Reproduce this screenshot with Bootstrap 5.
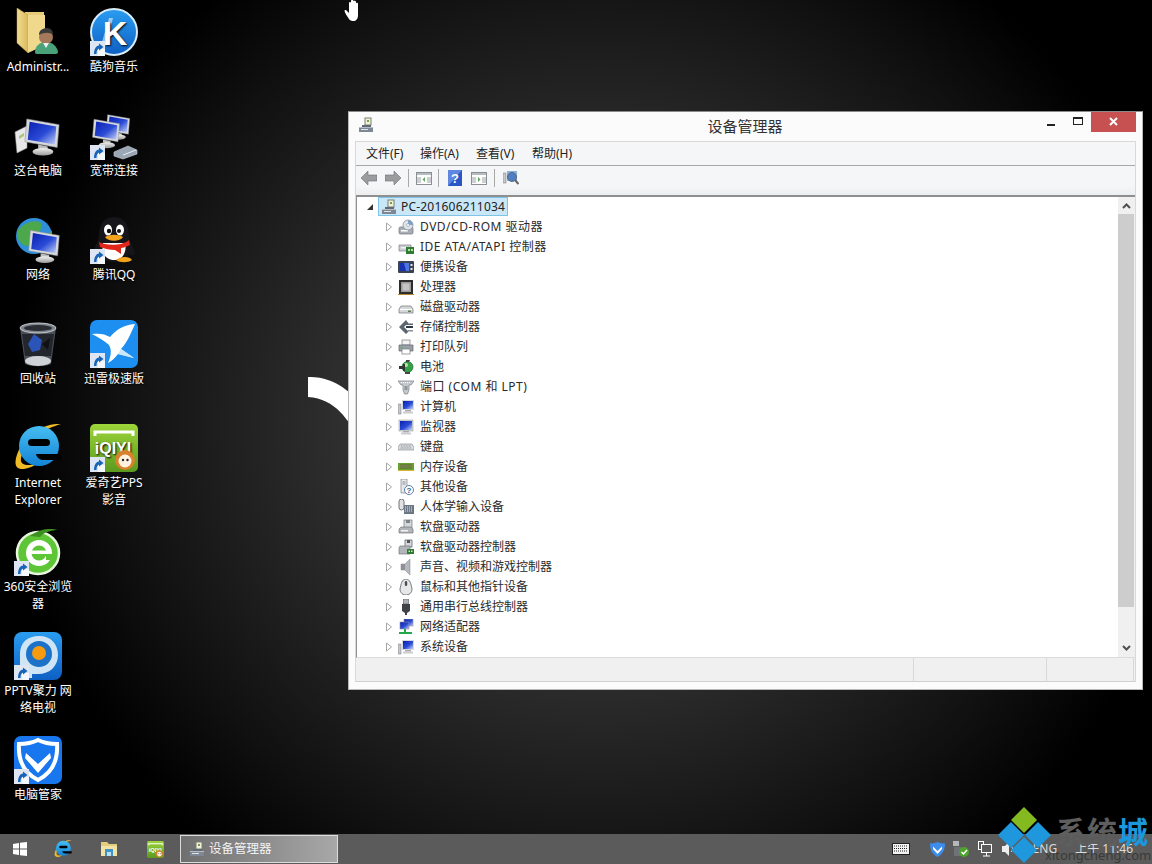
<!DOCTYPE html>
<html lang="zh-CN">
<head>
<meta charset="utf-8">
<title>设备管理器</title>
<link href="https://cdn.jsdelivr.net/npm/bootstrap@5.3.0/dist/css/bootstrap.min.css" rel="stylesheet">
<style>
html,body{margin:0;height:100%;overflow:hidden}
body{width:1152px;height:864px;background:#000;font-family:"Noto Sans","Noto Sans CJK SC",sans-serif;font-size:12px;color:#1a1a1a}
.defsbox{position:absolute;width:0;height:0;overflow:hidden}
.screen{width:1152px;height:864px;position:relative;overflow:hidden;background:radial-gradient(ellipse 590px 560px at 600px 420px,#484848 0%,#3b3b3b 28%,#252525 56%,#101010 82%,#000 100%)}
.desk{height:834px;position:relative}
.dgrid{display:grid;grid-auto-flow:column;grid-template-rows:repeat(8,104px);grid-template-columns:76px 76px;padding-top:0}
.ditem{width:76px;height:104px;padding-top:8px;position:relative;text-align:center;color:#fff;line-height:17px;text-shadow:1px 1px 2px #000}
.ditem>svg.ic{display:block;margin:0 auto 2px;width:48px;height:48px}
.sc{position:absolute;left:14px;top:41px;width:15px;height:15px}
.swoosh{position:absolute;left:300px;top:370px;width:60px;height:70px}
.hand{position:absolute;left:344px;top:0;width:18px;height:22px}
.win{position:absolute;left:348px;top:111px;width:795px;height:579px;background:#fbfbfb;border:1px solid #b8b8b8;border-top-color:#8a8a8a}
.ttl{height:29px;position:relative;font-size:15px;color:#333;line-height:29px;text-align:center;padding-right:1px}
.ttl .wi{position:absolute;left:9px;top:5px;width:16px;height:16px}
.wbtn{position:absolute;top:0;height:20px}
.wmin{left:687px;width:30px}
.wmin i{display:block;width:8px;height:2px;background:#222;margin:12px auto 0}
.wmax{left:714px;width:30px}
.wmax i{display:block;width:10px;height:8px;border:1px solid #222;border-top-width:2px;margin:5px auto 0}
.wcls{left:742px;width:45px;background:#c75050}
.wcls svg{display:block;width:9px;height:9px;margin:5px auto 0}
.pane{margin:0 6px 0 6px;border-left:1px solid #d9d9d9;border-right:1px solid #d9d9d9}
.mbar{height:25px;background:#f5f6f7;border-top:1px solid #d9d9d9;border-bottom:1px solid #a8a8a8;line-height:23px;color:#222}
.mbar span{display:block;width:56px;padding-left:10px}
.mbar span:first-child{width:54px}
.tbar{height:29px;background:linear-gradient(#f5f6f7 70%,#eceef0);padding:0 0 5px 5px}
.tbar svg{display:block;flex:none}
.tsep{width:1px;height:18px;background:#a9a9a9;flex:none}
.tg1{margin-left:7px}.tg2{margin-left:7px}.tg3{margin-left:6px}.tg4{margin-left:9px}.tg5{margin-left:9px}.tg6{margin-left:7px}.tg7{margin-left:8px}
.tree{height:463px;background:#fff;border-top:2px solid #8f8f8f;border-left:1px solid #8f8f8f;position:relative;border-bottom:1px solid #dcdcdc}
.trow{height:20px;line-height:20px;white-space:nowrap}
.root{padding-left:9px}
.rsel{display:flex;align-items:center;height:19px;border:1px solid #7fc4e8;background:#c9e7f7;padding-left:2px;margin-left:4px;width:130px;color:#222;margin-top:-1px;letter-spacing:.2px}
.rsel svg{flex:none;margin-right:4px}
.kid{padding-left:28px;color:#2a2a2a}
.kid.wide{letter-spacing:.5px}
.kid svg.x{flex:none;width:8px;height:10px;margin-right:5px}
.kid svg.d{flex:none;width:16px;height:16px;margin-right:6px}
.scroll{position:absolute;right:0;top:0;bottom:0;width:17px;background:#f0f0f0}
.sthumb{position:absolute;left:0;right:1px;top:17px;height:393px;background:#cdcdcd}
.sup{position:absolute;left:4px;top:6px;width:9px;height:6px}
.sdn{position:absolute;left:4px;bottom:6px;width:9px;height:6px}
.stat{height:24px;background:#f0f0f0;border-bottom:1px solid #d0d0d0}
.stat div{height:23px;border-right:1px solid #d8d8d8}
.s1{width:558px}.s2{width:133px}.s3{width:87px}
.tb{height:30px;background:#5b5b5b;position:relative;color:#e8e8e8}
.tapp{height:30px;width:46px;flex:none}
.tapp svg{display:block}
.tstart{width:40px}
.tact{width:158px;height:28px;margin-left:2px;border:1px solid #dcdcdc;background:linear-gradient(90deg,#6f6f6f,#a8a8a8);padding-left:8px;color:#f2f2f2;font-size:12.5px;flex:none}
.tact svg{margin-right:4px}
.tray svg{display:block;flex:none}
.trtx{color:#ddd;font-size:12px;white-space:nowrap}
.tk2{margin-left:20px}.tk3{margin-left:8px}.tk4{margin-left:9px}.tk5{margin-left:10px}.tk6{margin-left:17px}.tk7{margin-left:18px;margin-right:19px}
.wm{position:absolute;left:996px;top:805px;width:156px;height:59px;pointer-events:none}
.wmt{position:absolute;left:1056px;top:812px;font-size:30px;line-height:36px;font-weight:700;letter-spacing:1px;white-space:nowrap;font-family:"Noto Sans CJK SC",sans-serif;color:#5e5e5e}
.wmt b{color:#1b97dc;font-weight:700}
.wmu{position:absolute;left:1045px;top:847px;font-size:13px;line-height:16px;color:#3a3a3a;white-space:nowrap}
</style>
</head>
<body>
<svg class="defsbox" aria-hidden="true">
<defs>
<linearGradient id="gs" x1="0" y1="0" x2="1" y2="1"><stop offset="0" stop-color="#0a1fb0"/><stop offset=".55" stop-color="#2a4bd6"/><stop offset="1" stop-color="#c9d4f5"/></linearGradient>
<linearGradient id="gb" x1="0" y1="0" x2="0" y2="1"><stop offset="0" stop-color="#2a9df0"/><stop offset="1" stop-color="#0e5fc4"/></linearGradient>
<linearGradient id="gm" x1="0" y1="0" x2="0" y2="1"><stop offset="0" stop-color="#f2f2f2"/><stop offset="1" stop-color="#9a9a9a"/></linearGradient>
<linearGradient id="gf" x1="0" y1="0" x2="1" y2="0"><stop offset="0" stop-color="#f3dd93"/><stop offset="1" stop-color="#d9b95c"/></linearGradient>
<linearGradient id="gg" x1="0" y1="0" x2="0" y2="1"><stop offset="0" stop-color="#9ed53a"/><stop offset="1" stop-color="#5a9a1e"/></linearGradient>
<linearGradient id="ge" x1="0" y1="0" x2="0" y2="1"><stop offset="0" stop-color="#46bdf2"/><stop offset="1" stop-color="#1484d6"/></linearGradient>
<symbol id="sc" viewBox="0 0 15 15"><rect width="15" height="15" fill="#dde6f2"/><rect x="8" y="8" width="7" height="7" fill="#f4f7fb"/><path d="M4 13C4 8 6 5 9 4.500V2.500L13.500 6 9 9.500V7.500C7.500 8 6.500 10 6.500 13Z" fill="#1864b8"/></symbol>
<symbol id="mon" viewBox="0 0 40 40"><path d="M4 1 38 7 36 31 2 25Z" fill="#d6d8dc" stroke="#8b8f96" stroke-width=".6"/><path d="M7 4 35 9 33.500 28 5 23Z" fill="url(#gs)"/><path d="M16 28 26 30 26 34 16 32Z" fill="#bdbdbd"/><ellipse cx="21" cy="35.500" rx="11" ry="4" fill="url(#gm)"/></symbol>

<symbol id="i-folder" viewBox="0 0 48 48"><path d="M11 4H30V36H11Z" fill="#e6cb78"/><path d="M3 0 14 7V45L3 35Z" fill="url(#gf)" stroke="#b99a45" stroke-width=".5"/><path d="M14 7H31V37L14 45Z" fill="#f0d98c"/><path d="M21 44C21 38 26 34 32 34S43 38 44 44C44 46 42 46 40 46H24C22 46 21 46 21 44Z" fill="#4aa27a"/><circle cx="32" cy="29" r="7" fill="#a4785a"/><path d="M25 27C25 22 29 20 33 20S39 23 39 27C36 24 30 24 25 27Z" fill="#3a3a3a"/><path d="M29 35 32 40 35 35Z" fill="#eee"/></symbol>
<symbol id="i-kugou" viewBox="0 0 48 48"><circle cx="24" cy="24" r="23" fill="url(#gb)" stroke="#d8ecfa" stroke-width="2"/><path d="M12 34 19 10H23L16 38Z" fill="#cfe6f8" opacity=".7"/><text x="25" y="37" text-anchor="middle" font-family="Liberation Sans,sans-serif" font-weight="700" font-size="34" fill="#fff">K</text></symbol>
<symbol id="i-pc" viewBox="0 0 48 48"><path d="M1 20 13 14V36L3 41Z" fill="#e8e8e8" stroke="#9a9a9a" stroke-width=".5"/><path d="M5 24 10 21V24L5 27Z" fill="#aac47c"/><use href="#mon" x="9" y="2" width="38" height="46"/></symbol>
<symbol id="i-band" viewBox="0 0 48 48"><use href="#mon" x="15" y="0" width="26" height="30"/><use href="#mon" x="1" y="5" width="30" height="33"/><path d="M24 40 38 34 47 38 47 42 33 47 24 44Z" fill="#9aa7b4" stroke="#c9d2da" stroke-width=".6"/><path d="M33 43 46 38" stroke="#e8eef2" stroke-width="1"/></symbol>
<symbol id="i-net" viewBox="0 0 48 48"><circle cx="20" cy="20" r="18" fill="#2f8fd8"/><path d="M6 12C12 6 20 4 26 6 30 12 24 16 22 22 20 30 12 32 8 28 2 22 2 16 6 12Z" fill="#4da84b"/><path d="M26 24 34 20 38 14 38 26 30 32Z" fill="#4da84b"/><use href="#mon" x="13" y="13" width="34" height="35"/></symbol>
<symbol id="i-qq" viewBox="0 0 48 48"><path d="M24 1C13 1 9 10 9 20 9 25 4 32 3 37 3 40 7 40 9 38 11 43 17 46 24 46 32 46 37 43 39 38 41 40 45 40 45 37 44 32 39 25 39 20 39 10 35 1 24 1Z" fill="#16161a"/><path d="M13 27C11 34 14 44 24 44 34 44 37 34 35 27Z" fill="#fff"/><ellipse cx="18" cy="14" rx="4" ry="5.500" fill="#fff"/><ellipse cx="30" cy="14" rx="4" ry="5.500" fill="#fff"/><circle cx="19" cy="15" r="2.200" fill="#111"/><circle cx="29" cy="15" r="2" fill="#111"/><path d="M15 21C20 18 28 18 33 21 30 26 18 26 15 21Z" fill="#f2a51c"/><path d="M9 26C16 30 32 30 39 24L40 29C36 31 33 32 31 32V38L25 34 C20 34 15 33 10 31Z" fill="#e0271a"/><path d="M26 44C30 40 40 40 42 44 38 47 30 47 26 44Z" fill="#f2a51c"/></symbol>
<symbol id="i-bin" viewBox="0 0 48 48"><path d="M6 8 42 8 37 44C30 47 18 47 11 44Z" fill="#4a4f57"/><path d="M8 14 40 14 37 36 11 36Z" fill="#23262c"/><ellipse cx="24" cy="8" rx="18" ry="5" fill="#7f858c" stroke="#c5c9ce"/><ellipse cx="24" cy="8" rx="14" ry="3" fill="#2a2d33"/><path d="M14 24 20 14 28 20 26 30 18 32Z" fill="#2b54b8"/><path d="M28 24 36 18 34 30Z" fill="#111"/><ellipse cx="24" cy="41" rx="13" ry="5" fill="#cfd2d6"/></symbol>
<symbol id="i-xl" viewBox="0 0 48 48"><rect width="48" height="48" rx="7" fill="#1d8ff0"/><path d="M2 14C10 13 15 14 20 17 26 10 33 5 45 4 41 13 37 23 31 29L44 38 28 34C25 38 22 41 18 43 21 36 22 30 19 25 15 21 9 18 2 14Z" fill="#fff"/><path d="M31 29 44 38 28 34Z" fill="#cbe6fb"/></symbol>
<symbol id="i-ie" viewBox="0 0 48 48"><path d="M47 0C30-1 12 10 4 28 0 38 0 46 10 45 16 44 20 42 24 39 16 42 8 42 7 37 6 32 12 20 22 12 30 6 40 2 47 0Z" fill="#f0bb26"/><circle cx="25" cy="22" r="20" fill="url(#ge)"/><rect x="14" y="15" width="22" height="7" rx="3.500" fill="#000"/><path d="M22 30H47V36H30C26 36 23 34 22 30Z" fill="#000"/></symbol>
<symbol id="i-iq" viewBox="0 0 48 48"><rect width="48" height="48" rx="5" fill="url(#gg)"/><path d="M5 12V8H43V12" fill="none" stroke="#fff" stroke-width="3"/><text x="23" y="30" text-anchor="middle" font-family="Liberation Sans,sans-serif" font-weight="700" font-size="16" fill="#fff">iQIYI</text><circle cx="35" cy="36" r="10" fill="#d9812d"/><circle cx="35" cy="37" r="6.500" fill="#fff3e0"/><circle cx="33" cy="36" r="1.200" fill="#222"/><circle cx="37.500" cy="36" r="1.200" fill="#222"/></symbol>
<symbol id="i-360" viewBox="0 0 48 48"><circle cx="24" cy="25" r="21" fill="#5dc536"/><circle cx="24" cy="25" r="21" fill="none" stroke="#eaf7e0" stroke-width="2.500"/><ellipse cx="25" cy="25" rx="13" ry="13" fill="#fff"/><circle cx="25" cy="25" r="7.500" fill="#5dc536"/><rect x="16" y="22.500" width="20" height="3.500" fill="#fff"/><rect x="32" y="26" width="7" height="6" fill="#5dc536"/><path d="M16 8C26 0 38 0 44 2 38 2 30 4 26 9Z" fill="#3d8f1f"/></symbol>
<symbol id="i-pptv" viewBox="0 0 48 48"><rect width="48" height="48" rx="8" fill="url(#gb)"/><path d="M6 46V22C6 10 14 4 25 4 37 4 44 12 44 23 44 34 36 42 24 42H18V46Z" fill="#cfe4f4"/><circle cx="25" cy="22" r="13" fill="#1b72c8"/><circle cx="25" cy="21" r="7" fill="#f69a10"/></symbol>
<symbol id="i-gj" viewBox="0 0 48 48"><rect width="48" height="48" rx="7" fill="#1876ef"/><path d="M24 4C30 7 37 8 43 8 44 24 38 37 24 44 10 37 4 24 5 8 11 8 18 7 24 4Z" fill="none" stroke="#fff" stroke-width="4"/><path d="M12 17 24 28 36 17 37 22 24 37 11 22Z" fill="#fff"/></symbol>

<symbol id="d-pcr" viewBox="0 0 16 16"><rect x="7" y="1" width="6" height="7" fill="#eef2da" stroke="#7a7f70"/><rect x="9" y="3" width="2" height="2" fill="#7a9a50"/><path d="M4 8H13V10H4Z" fill="#5f6b78"/><path d="M1 10H15V15H1Z" fill="#7d8894"/><path d="M1 10H15V11H1Z" fill="#b5bcc4"/><rect x="3" y="12" width="7" height="1" fill="#e1e5ea"/></symbol>
<symbol id="d-dvd" viewBox="0 0 16 16"><rect x="1" y="8" width="14" height="7" rx="1.500" fill="#a9aeb5" stroke="#6c7178" stroke-width=".7"/><rect x="3" y="11" width="7" height="1.500" fill="#fff"/><circle cx="10" cy="6" r="5" fill="#dfe4ea" stroke="#7d848c" stroke-width=".7"/><circle cx="10" cy="6" r="1.500" fill="#fff" stroke="#7d848c" stroke-width=".5"/><path d="M10 1A5 5 0 0 1 15 6H11.500A1.500 1.500 0 0 0 10 4.500Z" fill="#7fa1c4"/></symbol>
<symbol id="d-ide" viewBox="0 0 16 16"><path d="M1 6H13V12H1Z" fill="#c9ccd0" stroke="#7b8087" stroke-width=".7"/><rect x="3" y="8" width="5" height="1.500" fill="#f2f2f2"/><rect x="8" y="8" width="8" height="7" fill="#2e7d32"/><rect x="10" y="10" width="2" height="2" fill="#b8e0a0"/><rect x="13" y="10" width="2" height="2" fill="#b8e0a0"/></symbol>
<symbol id="d-port" viewBox="0 0 16 16"><rect x="0" y="2" width="16" height="12" rx="1" fill="#3a4452"/><rect x="2" y="4" width="9" height="8" fill="#1533b0"/><path d="M6 4H11V12H8Z" fill="#4e74e0"/><rect x="12.500" y="5" width="2" height="2" fill="#e8e8e8"/><rect x="12.500" y="9" width="2" height="2" fill="#e8e8e8"/></symbol>
<symbol id="d-cpu" viewBox="0 0 16 16"><rect x="1" y="1" width="14" height="14" fill="#2d2d2d"/><rect x="3" y="3" width="10" height="10" fill="#9a9a9a"/><rect x="4.500" y="4.500" width="7" height="7" fill="#c4c4c4"/><path d="M0 15H16V16H0Z" fill="#b58a2a"/></symbol>
<symbol id="d-hdd" viewBox="0 0 16 16"><path d="M3 7H13L15 10V14H1V10Z" fill="#d4d6d9" stroke="#70757b" stroke-width=".7"/><path d="M2 10.500H14" stroke="#fff"/><rect x="10" y="11.500" width="3" height="1.500" fill="#5f7f4c"/></symbol>
<symbol id="d-stor" viewBox="0 0 16 16"><path d="M8 1 1 8 8 15 10.500 12.500 6 8 8 6H15V4.500H10.500Z" fill="#5d6670"/><rect x="8" y="7" width="7" height="2" fill="#2e3740"/><rect x="10" y="11" width="5" height="1.500" fill="#8a939c"/></symbol>
<symbol id="d-prn" viewBox="0 0 16 16"><rect x="4" y="1" width="8" height="5" fill="#f4f4f4" stroke="#77797c" stroke-width=".7"/><path d="M1 6H15V12H1Z" fill="#9aa0a7" stroke="#60656b" stroke-width=".7"/><rect x="4" y="10" width="8" height="5" fill="#fff" stroke="#77797c" stroke-width=".7"/><rect x="2.500" y="8" width="2" height="1" fill="#4fb04f"/></symbol>
<symbol id="d-bat" viewBox="0 0 16 16"><circle cx="9.500" cy="8" r="5.500" fill="#35a04a" stroke="#1f6a30" stroke-width=".7"/><circle cx="8" cy="6" r="2" fill="#b7e6a8"/><path d="M1 7H5V5H7V12H5V10H1Z" fill="#333"/><path d="M8 1H12L11 3H8Z" fill="#444"/><path d="M7 13H12V15H7Z" fill="#444"/></symbol>
<symbol id="d-com" viewBox="0 0 16 16"><path d="M0 2H16L13 6H11V11L9.500 15H6.500L5 11V6H3Z" fill="#c5c9cd" stroke="#7a8087" stroke-width=".7"/><rect x="6.500" y="7" width="3" height="4" fill="#8f959b"/><path d="M3 3.500H13" stroke="#fff" stroke-dasharray="1 1"/></symbol>
<symbol id="d-cmp" viewBox="0 0 16 16"><rect x="0" y="5" width="3" height="10" fill="#c4c7cc" stroke="#73777c" stroke-width=".5"/><rect x="4" y="1" width="12" height="10" fill="#d4d7db"/><rect x="5" y="2" width="10" height="8" fill="url(#gs)"/><rect x="7" y="11" width="6" height="1.500" fill="#a8abae"/><rect x="5" y="12.500" width="10" height="2" fill="#c9ccd0"/></symbol>
<symbol id="d-mon" viewBox="0 0 16 16"><rect x="1" y="1" width="14" height="11" fill="#d4d7db" stroke="#8a8e94" stroke-width=".5"/><rect x="2" y="2" width="12" height="9" fill="url(#gs)"/><rect x="5" y="12" width="6" height="1.500" fill="#a8abae"/><rect x="3" y="13.500" width="10" height="2" fill="#c9ccd0"/></symbol>
<symbol id="d-kb" viewBox="0 0 16 16"><path d="M2 5H14L16 8.500V11H0V8.500Z" fill="#d9dbde" stroke="#7d8186" stroke-width=".6"/><path d="M3 7H13M2.500 9H13.500" stroke="#8f9398" stroke-dasharray="1 .6"/></symbol>
<symbol id="d-mem" viewBox="0 0 16 16"><rect x="0" y="4" width="16" height="8" fill="#66a32a"/><rect x="2" y="5.500" width="12" height="4" fill="#10361a"/><path d="M3 5.500V9.500M5 5.500V9.500M7 5.500V9.500M9 5.500V9.500M11 5.500V9.500M13 5.500V9.500" stroke="#d9c877"/><rect x="0" y="11" width="16" height="1" fill="#d9b23a"/></symbol>
<symbol id="d-oth" viewBox="0 0 16 16"><path d="M3 0H9V14H3Z" fill="#e7e8ea" stroke="#7d8187" stroke-width=".7"/><rect x="4.500" y="2" width="3" height="4" fill="#b5bac0"/><circle cx="11" cy="11" r="4.500" fill="#fff" stroke="#5c7fae"/><text x="11" y="14" text-anchor="middle" font-family="Liberation Sans,sans-serif" font-size="8" font-weight="700" fill="#29558f">?</text></symbol>
<symbol id="d-hid" viewBox="0 0 16 16"><rect x="1" y="0" width="5" height="11" rx="2.500" fill="#e0e2e5" stroke="#4e5257" stroke-width=".8"/><rect x="6" y="6" width="10" height="9" fill="#6b7785"/><path d="M7 8H15M7 10H15M7 12H15" stroke="#dfe4ea" stroke-dasharray="1 1"/></symbol>
<symbol id="d-fd" viewBox="0 0 16 16"><rect x="6" y="1" width="8" height="8" fill="#d5d7da" stroke="#70757b" stroke-width=".7"/><rect x="8" y="1" width="4" height="3" fill="#7d838a"/><path d="M3 8H13L15 10V14H1V10Z" fill="#b2b6bb" stroke="#70757b" stroke-width=".7"/><rect x="3" y="11" width="7" height="1.500" fill="#f2f2f2"/></symbol>
<symbol id="d-fdc" viewBox="0 0 16 16"><rect x="7" y="1" width="7" height="7" fill="#d5d7da" stroke="#565a5f" stroke-width=".7"/><rect x="9" y="1" width="3" height="3" fill="#555"/><path d="M2 7H12V15H1V9Z" fill="#b2b6bb" stroke="#70757b" stroke-width=".7"/><rect x="9" y="10" width="7" height="5" fill="#2e7d32"/><rect x="10.500" y="11.500" width="1.500" height="1.500" fill="#cbe6b6"/><rect x="13" y="11.500" width="1.500" height="1.500" fill="#cbe6b6"/></symbol>
<symbol id="d-snd" viewBox="0 0 16 16"><path d="M3 5H7L12 0V16L7 11H3Z" fill="#b5b9bd" stroke="#7f8388" stroke-width=".5"/><path d="M3 5H7V11H3Z" fill="#8d9196"/></symbol>
<symbol id="d-ms" viewBox="0 0 16 16"><path d="M8 0C12 0 13 5 14 10 14 14 11 16 8 16S2 14 2 10C3 5 4 0 8 0Z" fill="#e6e7e9" stroke="#55595e" stroke-width=".8"/><rect x="6.800" y="2" width="2.400" height="5" rx="1.200" fill="#4a4e53"/></symbol>
<symbol id="d-usb" viewBox="0 0 16 16"><rect x="5.500" y="0" width="5" height="5" fill="#aeb2b6" stroke="#55595d" stroke-width=".6"/><path d="M4 5H12V12L9 14V16H7V14L4 12Z" fill="#3f4347"/></symbol>
<symbol id="d-nic" viewBox="0 0 16 16"><rect x="6" y="0" width="9" height="7" fill="url(#gs)" stroke="#8c9096" stroke-width=".6"/><rect x="2" y="3" width="9" height="7" fill="url(#gs)" stroke="#8c9096" stroke-width=".6"/><path d="M7 10V13M1 14H14" stroke="#25a84a" stroke-width="2"/></symbol>

<symbol id="t-kb" viewBox="0 0 18 12"><rect x=".5" y=".5" width="17" height="11" fill="#f2f2f2" stroke="#222"/><path d="M2 3H16M2 5.500H16M2 8H16" stroke="#222" stroke-dasharray="1 1"/></symbol>
<symbol id="t-x" viewBox="0 0 8 10"><path d="M1.500 1 6.500 5 1.500 9Z" fill="#fff" stroke="#a6a6a6"/></symbol>
</defs>
</svg>

<div class="screen">
<div class="desk">
<svg class="swoosh" viewBox="0 0 60 70"><path d="M8 7C26 7 40 12 60 32V70C48 50 36 29 8 27Z" fill="#fff"/></svg>
<svg class="hand" viewBox="0 0 18 22"><path d="M5 19C3 16 1 13 .500 11 .500 10 2 9.500 3 11L5 13V3C5 1.500 7 1.500 7 3V0.800C7-.4 9.500-.4 9.500 1V1.500C9.500 .4 12 .4 12 2V3.500C12 2.400 14 2.400 14 3.500V15C14 19 12 21 9.500 21 7.500 21 6 20.500 5 19Z" fill="#fff"/></svg>

<div class="dgrid">
<div class="ditem"><svg class="ic"><use href="#i-folder"/></svg>Administr...</div>
<div class="ditem"><svg class="ic"><use href="#i-pc"/></svg>这台电脑</div>
<div class="ditem"><svg class="ic"><use href="#i-net"/></svg>网络</div>
<div class="ditem"><svg class="ic"><use href="#i-bin"/></svg>回收站</div>
<div class="ditem"><svg class="ic"><use href="#i-ie"/></svg>Internet<br>Explorer</div>
<div class="ditem"><svg class="ic"><use href="#i-360"/></svg><svg class="sc"><use href="#sc"/></svg>360安全浏览<br>器</div>
<div class="ditem"><svg class="ic"><use href="#i-pptv"/></svg><svg class="sc"><use href="#sc"/></svg>PPTV聚力 网<br>络电视</div>
<div class="ditem"><svg class="ic"><use href="#i-gj"/></svg><svg class="sc"><use href="#sc"/></svg>电脑管家</div>
<div class="ditem"><svg class="ic"><use href="#i-kugou"/></svg><svg class="sc"><use href="#sc"/></svg>酷狗音乐</div>
<div class="ditem"><svg class="ic"><use href="#i-band"/></svg><svg class="sc"><use href="#sc"/></svg>宽带连接</div>
<div class="ditem"><svg class="ic"><use href="#i-qq"/></svg><svg class="sc"><use href="#sc"/></svg>腾讯QQ</div>
<div class="ditem"><svg class="ic"><use href="#i-xl"/></svg><svg class="sc"><use href="#sc"/></svg>迅雷极速版</div>
<div class="ditem"><svg class="ic"><use href="#i-iq"/></svg><svg class="sc"><use href="#sc"/></svg>爱奇艺PPS<br>影音</div>
</div>

<div class="win">
  <div class="ttl">
    <svg class="wi"><use href="#d-pcr"/></svg>设备管理器
    <div class="wbtn wmin"><i></i></div>
    <div class="wbtn wmax"><i></i></div>
    <div class="wbtn wcls"><svg viewBox="0 0 9 9"><path d="M1 1 8 8M8 1 1 8" stroke="#fff" stroke-width="2"/></svg></div>
  </div>
  <div class="pane">
    <div class="mbar d-flex"><span>文件(F)</span><span>操作(A)</span><span>查看(V)</span><span>帮助(H)</span></div>
    <div class="tbar d-flex align-items-center">
      <svg width="16" height="14" viewBox="0 0 16 14"><path d="M7 0 0 7 7 14V10H16V4H7Z" fill="#9a9c9e" stroke="#6f7173" stroke-width=".6"/></svg>
      <svg class="ms-2" width="16" height="14" viewBox="0 0 16 14"><path d="M9 0 16 7 9 14V10H0V4H9Z" fill="#9a9c9e" stroke="#6f7173" stroke-width=".6"/></svg>
      <div class="tsep tg1"></div>
      <svg class="tg2" width="16" height="13" viewBox="0 0 16 13"><rect x=".5" y=".5" width="15" height="12" fill="#fff" stroke="#8a8f93"/><rect x="1" y="1" width="14" height="2" fill="#b5bcc2"/><path d="M1 6H5M1 8H5M1 10H5M11 6H15M11 8H15M11 10H15" stroke="#9aa1a6"/><path d="M9 5 6.500 7.500 9 10Z" fill="#5fa85f"/></svg>
      <div class="tsep tg3"></div>
      <svg class="tg4" width="14" height="16" viewBox="0 0 14 16"><rect width="14" height="16" fill="#2a55c4"/><path d="M0 0H14L0 16Z" fill="#5f86e0"/><text x="7" y="13" text-anchor="middle" font-family="Liberation Sans,sans-serif" font-size="13" font-weight="700" fill="#fff">?</text></svg>
      <svg class="tg5" width="16" height="13" viewBox="0 0 16 13"><rect x=".5" y=".5" width="15" height="12" fill="#fff" stroke="#8a8f93"/><rect x="1" y="1" width="14" height="2" fill="#b5bcc2"/><path d="M1 6H5M1 8H5M1 10H5M11 6H15M11 8H15M11 10H15" stroke="#9aa1a6"/><path d="M7 5 9.500 7.500 7 10Z" fill="#5fa85f"/></svg>
      <div class="tsep tg6"></div>
      <svg class="tg7" width="16" height="16" viewBox="0 0 16 16"><rect x="0" y="3" width="3" height="10" fill="#c4c7cc" stroke="#777" stroke-width=".5"/><rect x="4" y="1" width="10" height="10" fill="#8ab0dc"/><circle cx="9" cy="7" r="4.500" fill="#2a5db0" fill-opacity=".6" stroke="#5a6a80"/><path d="M12 10 15.500 14" stroke="#666" stroke-width="2"/></svg>
    </div>
    <div class="tree">
      <div class="trow root d-flex align-items-center">
        <svg width="8" height="8" viewBox="0 0 8 8" class="flex-shrink-0"><path d="M7 1V7H1Z" fill="#333"/></svg>
        <div class="rsel"><svg width="16" height="16"><use href="#d-pcr"/></svg>PC-201606211034</div>
      </div>
      <div class="trow kid wide d-flex align-items-center"><svg class="x"><use href="#t-x"/></svg><svg class="d"><use href="#d-dvd"/></svg>DVD/CD-ROM 驱动器</div>
      <div class="trow kid wide d-flex align-items-center"><svg class="x"><use href="#t-x"/></svg><svg class="d"><use href="#d-ide"/></svg>IDE ATA/ATAPI 控制器</div>
      <div class="trow kid d-flex align-items-center"><svg class="x"><use href="#t-x"/></svg><svg class="d"><use href="#d-port"/></svg>便携设备</div>
      <div class="trow kid d-flex align-items-center"><svg class="x"><use href="#t-x"/></svg><svg class="d"><use href="#d-cpu"/></svg>处理器</div>
      <div class="trow kid d-flex align-items-center"><svg class="x"><use href="#t-x"/></svg><svg class="d"><use href="#d-hdd"/></svg>磁盘驱动器</div>
      <div class="trow kid d-flex align-items-center"><svg class="x"><use href="#t-x"/></svg><svg class="d"><use href="#d-stor"/></svg>存储控制器</div>
      <div class="trow kid d-flex align-items-center"><svg class="x"><use href="#t-x"/></svg><svg class="d"><use href="#d-prn"/></svg>打印队列</div>
      <div class="trow kid d-flex align-items-center"><svg class="x"><use href="#t-x"/></svg><svg class="d"><use href="#d-bat"/></svg>电池</div>
      <div class="trow kid wide d-flex align-items-center"><svg class="x"><use href="#t-x"/></svg><svg class="d"><use href="#d-com"/></svg>端口 (COM 和 LPT)</div>
      <div class="trow kid d-flex align-items-center"><svg class="x"><use href="#t-x"/></svg><svg class="d"><use href="#d-cmp"/></svg>计算机</div>
      <div class="trow kid d-flex align-items-center"><svg class="x"><use href="#t-x"/></svg><svg class="d"><use href="#d-mon"/></svg>监视器</div>
      <div class="trow kid d-flex align-items-center"><svg class="x"><use href="#t-x"/></svg><svg class="d"><use href="#d-kb"/></svg>键盘</div>
      <div class="trow kid d-flex align-items-center"><svg class="x"><use href="#t-x"/></svg><svg class="d"><use href="#d-mem"/></svg>内存设备</div>
      <div class="trow kid d-flex align-items-center"><svg class="x"><use href="#t-x"/></svg><svg class="d"><use href="#d-oth"/></svg>其他设备</div>
      <div class="trow kid d-flex align-items-center"><svg class="x"><use href="#t-x"/></svg><svg class="d"><use href="#d-hid"/></svg>人体学输入设备</div>
      <div class="trow kid d-flex align-items-center"><svg class="x"><use href="#t-x"/></svg><svg class="d"><use href="#d-fd"/></svg>软盘驱动器</div>
      <div class="trow kid d-flex align-items-center"><svg class="x"><use href="#t-x"/></svg><svg class="d"><use href="#d-fdc"/></svg>软盘驱动器控制器</div>
      <div class="trow kid d-flex align-items-center"><svg class="x"><use href="#t-x"/></svg><svg class="d"><use href="#d-snd"/></svg>声音、视频和游戏控制器</div>
      <div class="trow kid d-flex align-items-center"><svg class="x"><use href="#t-x"/></svg><svg class="d"><use href="#d-ms"/></svg>鼠标和其他指针设备</div>
      <div class="trow kid d-flex align-items-center"><svg class="x"><use href="#t-x"/></svg><svg class="d"><use href="#d-usb"/></svg>通用串行总线控制器</div>
      <div class="trow kid d-flex align-items-center"><svg class="x"><use href="#t-x"/></svg><svg class="d"><use href="#d-nic"/></svg>网络适配器</div>
      <div class="trow kid d-flex align-items-center"><svg class="x"><use href="#t-x"/></svg><svg class="d"><use href="#d-cmp"/></svg>系统设备</div>
      <div class="scroll">
        <svg class="sup" viewBox="0 0 9 6"><path d="M1 5 4.500 1.500 8 5" fill="none" stroke="#505050" stroke-width="2"/></svg>
        <div class="sthumb"></div>
        <svg class="sdn" viewBox="0 0 9 6"><path d="M1 1 4.500 4.500 8 1" fill="none" stroke="#505050" stroke-width="2"/></svg>
      </div>
    </div>
    <div class="stat d-flex"><div class="s1"></div><div class="s2"></div><div class="s3"></div></div>
  </div>
</div>
</div>

<div class="tb d-flex align-items-center">
  <div class="tapp tstart d-flex align-items-center justify-content-center"><svg width="14" height="14" viewBox="0 0 14 14"><path d="M0 2 6 1V6.500H0ZM7 .8 14 0V6.500H7ZM0 7.500H6V13L0 12ZM7 7.500H14V14L7 13.200Z" fill="#fff"/></svg></div>
  <div class="tapp d-flex align-items-center justify-content-center"><svg width="18" height="18"><use href="#i-ie"/></svg></div>
  <div class="tapp d-flex align-items-center justify-content-center"><svg width="18" height="16" viewBox="0 0 18 16"><path d="M1 1H7L9 3H17V15H1Z" fill="#e4cd7c"/><rect x="1" y="5" width="16" height="10" fill="#f3e3a5"/><rect x="5" y="8" width="8" height="7" fill="#3f95c9"/><rect x="7" y="11" width="4" height="4" fill="#bfe0f3"/></svg></div>
  <div class="tapp d-flex align-items-center justify-content-center"><svg width="17" height="17"><use href="#i-iq"/></svg></div>
  <div class="tact d-flex align-items-center"><svg width="16" height="16"><use href="#d-pcr"/></svg>设备管理器</div>
  <div class="tray d-flex align-items-center ms-auto">
    <svg width="18" height="12"><use href="#t-kb"/></svg>
    <svg class="tk2" width="15" height="15" viewBox="0 0 15 15"><path d="M7.500 0C10 1 12.500 1.500 15 1.500 15 8 12.500 12.500 7.500 15 2.500 12.500 0 8 0 1.500 2.500 1.500 5 1 7.500 0Z" fill="#3d8dec"/><path d="M3 4.500 7.500 9 12 4.500 12 7 7.500 12 3 7Z" fill="#fff"/></svg>
    <svg class="tk3" width="16" height="16" viewBox="0 0 16 16"><rect x="0" y="0" width="6" height="5" fill="#b5b8bb"/><rect x="1" y="6" width="7" height="9" fill="#6f7377"/><circle cx="11" cy="11" r="5" fill="#4ca52a"/><path d="M8.500 11 10.500 13 14 9" fill="none" stroke="#fff" stroke-width="1.500"/></svg>
    <svg class="tk4" width="14" height="16" viewBox="0 0 14 16"><rect x=".5" y=".5" width="5" height="8" fill="none" stroke="#fff"/><rect x="3.500" y="3.500" width="10" height="8" fill="#5b5b5b" stroke="#fff"/><path d="M8.500 12V15M5 15H12" stroke="#fff"/></svg>
    <svg class="tk5" width="14" height="14" viewBox="0 0 14 14"><path d="M0 4H3L7 0V14L3 10H0Z" fill="#eee"/><path d="M9 4C11 6 11 8 9 10" fill="none" stroke="#eee"/></svg>
    <span class="trtx tk6">ENG</span>
    <span class="trtx tk7">上午 11:46</span>
  </div>
</div>

<svg class="wm" viewBox="0 0 156 59"><g fill="#1e97dd"><path d="M15 17 28 30 15 43 2 30Z"/><path d="M42 17 55 30 42 43 29 30Z"/><path d="M28 32 41 45 28 58 15 45Z"/></g><path d="M28 2 41 15 28 28 15 15Z" fill="#84b91f"/></svg>
<div class="wmt">系统<b>城</b></div>
<div class="wmu">xitongcheng.com</div>
</div>
</body>
</html>
